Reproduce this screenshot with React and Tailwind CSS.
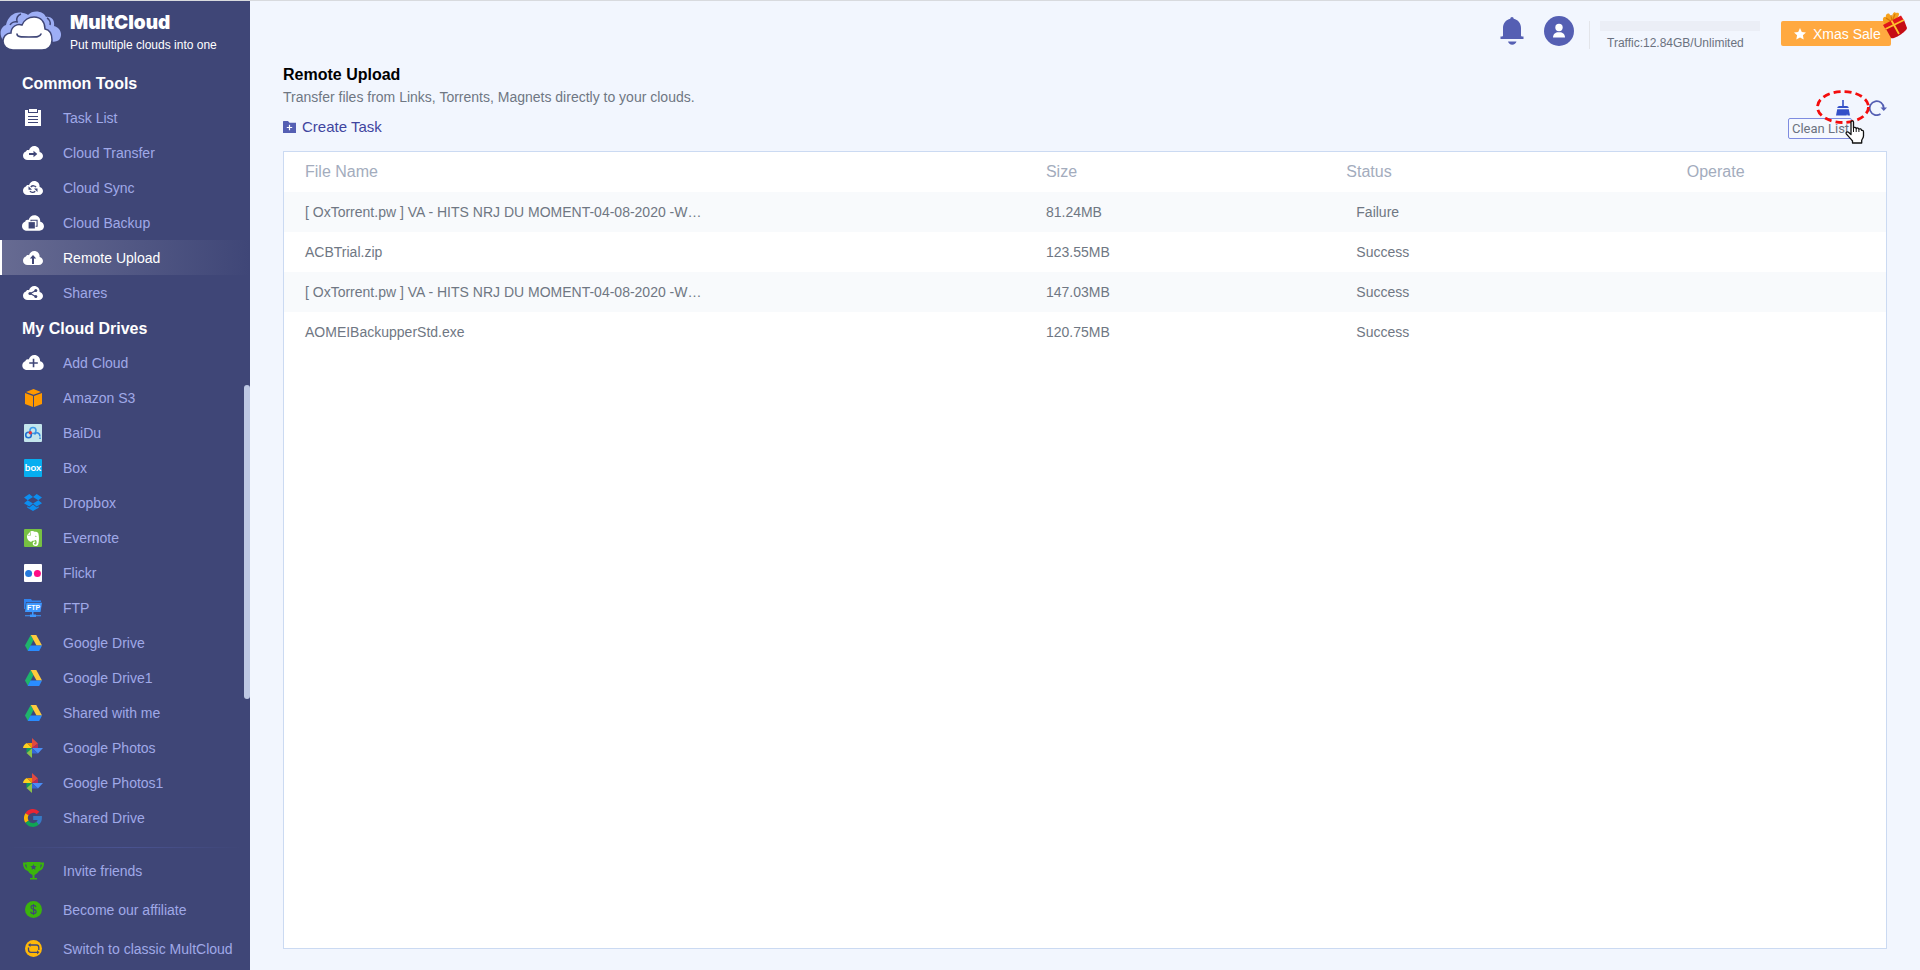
import React from 'react'
import { clsx } from 'clsx'

const CLOUD = 'M4.6 14C2 14 0 12.2 0 9.7 0 7.7 1.2 6.2 3 5.6 3.1 4.7 3.9 4 5 4c.4 0 .7 0 1 .2C6.8 1.7 8.8 0 11.2 0c3.2 0 5.4 2.4 5.4 5.3v.6C18.6 6.3 20 7.9 20 10c0 2.3-1.8 4-4.2 4z'

const CloudIcon = ({ className = 'w-5 h-[14px]', children }) => (
    <svg className={className} viewBox="0 0 20 14" fill="none" aria-hidden="true">
        <path d={CLOUD} fill="#fff" />
        {children}
    </svg>
)

const TaskIcon = () => (
    <svg className="w-4 h-[17px]" viewBox="0 0 16 17" aria-hidden="true">
        <path d="M0 1h3v3h10V1h3v16H0z" fill="#fff" />
        <path d="M4 0h8v3H4z" fill="#fff" />
        <path d="M3 7.5h10M3 10.5h10M3 13.5h10" stroke="#3f4677" />
    </svg>
)

const TransferIcon = () => (
    <CloudIcon>
        <path d="M6 7h4.5V4.8L14.3 8l-3.8 3.2V9H6z" fill="#3f4677" />
    </CloudIcon>
)

const SyncIcon = () => (
    <CloudIcon>
        <path d="M13 6.2C12 4.6 9.4 4.2 7.8 6M7 10c1 1.600 3.600 2 5.200.2" stroke="#3f4677" strokeWidth="1.400" />
        <path d="M5.500 5.200v3.500H9zM14.500 11V7.500H11z" fill="#3f4677" />
    </CloudIcon>
)

const BackupIcon = () => (
    <CloudIcon className="w-[22px] h-4">
        <path d="M8.200 5.500V4.500h5.500v5.500h-1.300" stroke="#3f4677" strokeWidth="1" />
        <path d="M6 6.200h5.700V12H6z" fill="#3f4677" />
    </CloudIcon>
)

const UploadIcon = () => (
    <CloudIcon>
        <path d="M10 4l3.200 3.500H11V13H9V7.500H6.800z" fill="#3f4677" />
    </CloudIcon>
)

const ShareIcon = () => (
    <CloudIcon>
        <path d="M13 4.500L7.300 7.500l5.700 3.200" stroke="#3f4677" strokeWidth="1.200" />
        <circle cx="7" cy="7.500" r="1.600" fill="#3f4677" />
        <circle cx="12.800" cy="4.600" r="1.500" fill="#3f4677" />
        <circle cx="12.800" cy="10.600" r="1.500" fill="#3f4677" />
    </CloudIcon>
)

const AddIcon = () => (
    <CloudIcon className="w-[22px] h-[15px]">
        <path d="M10.500 3.500v8M6.500 7.500h8" stroke="#3f4677" strokeWidth="1.500" />
    </CloudIcon>
)

const AmazonIcon = () => (
    <svg className="w-[17px] h-[18px]" viewBox="0 0 17 18" fill="#ff9900" aria-hidden="true">
        <path d="M8.500 0L16 2.900 8.500 5.700 1 2.900zM0 4l8 3v11l-8-3zM17 4L9 7v11l8-3z" />
    </svg>
)

const BaiduIcon = () => (
    <svg className="w-[18px] h-[18px]" viewBox="0 0 18 18" fill="none" aria-hidden="true">
        <rect width="18" height="18" rx="1" fill="#c3e5ec" />
        <circle cx="9" cy="6.500" r="3" stroke="#3d9be9" strokeWidth="1.600" />
        <circle cx="4.500" cy="11" r="2.800" stroke="#1f6fd0" strokeWidth="1.600" />
        <path d="M10.500 10.500c2-3 5.500-1.500 5.500 2" stroke="#2f86de" strokeWidth="1.500" />
        <path d="M15.300 13.500h1.500V15h-1.500z" fill="#2f86de" />
        <circle cx="6.300" cy="8.800" r="1.700" fill="#e8353b" />
    </svg>
)

const BoxIcon = () => (
    <svg className="w-[18px] h-[18px]" viewBox="0 0 18 18" aria-hidden="true">
        <rect width="18" height="18" rx="1" fill="#06aef0" />
        <text x="9" y="12" textAnchor="middle" fontSize="10" fill="#fff" fontFamily="Lato, sans-serif" fontWeight="bold">box</text>
    </svg>
)

const DropboxIcon = () => (
    <svg className="w-[18px] h-[17px]" viewBox="0 0 18 17" fill="#0c8ef0" aria-hidden="true">
        <path d="M5.300 0L9 3.100 3.700 6.300 0 3.400zM12.700 0L9 3.100l5.300 3.200L18 3.400zM0 9.300l3.700-3L9 9.600l-3.700 3zM18 9.300l-3.700-3L9 9.600l3.700 3zM9 10.600l3.700 3 2-1.300v1.400L9 17l-5.700-3.300v-1.400l2 1.300z" />
    </svg>
)

const EvernoteIcon = () => (
    <svg className="w-[18px] h-[18px]" viewBox="0 0 18 18" aria-hidden="true">
        <rect width="18" height="18" rx="1" fill="#77c142" />
        <path d="M3 6.200L6.500 2.500c1.500-.8 3-.6 4 .2 2 0 3.500.4 3.900 1.800.8 3.500.8 7-.1 10.500-.3 1.500-1.300 2-2.600 2-2 0-3-1-3-2.500s1-2.200 2.500-2.200v1.400c-.8 0-1.100.3-1.100.9s.5 1 1.300 1c.9 0 1.200-.8 1.200-2.300 0-1.300-.3-1.900-1-2.200-.9.800-2 .9-3.100.6-.6 1-1.500 1.200-2.500.7C3.700 11.500 2.600 9 3 6.200z" fill="#fff" />
        <path d="M10.800 7.600c.3-1 1.500-1 1.900.2z" fill="#77c142" />
        <path d="M3.500 6.300h3V3.200" stroke="#77c142" strokeWidth=".6" fill="none" />
    </svg>
)

const FlickrIcon = () => (
    <svg className="w-[18px] h-[18px]" viewBox="0 0 18 18" aria-hidden="true">
        <rect width="18" height="18" rx="1" fill="#fff" />
        <circle cx="4.600" cy="9.500" r="3.500" fill="#2479dc" />
        <circle cx="13.400" cy="9.500" r="3.500" fill="#ff0e87" />
    </svg>
)

const FtpIcon = () => (
    <svg className="w-[18px] h-[18px]" viewBox="0 0 18 18" aria-hidden="true">
        <path d="M0 0h7l1 1.500h9V3H2L1 10H0z" fill="#2f83f0" />
        <path d="M2.500 3.700H18L16.500 13H1z" fill="#3d98ff" />
        <path d="M8 13h1.500v2.500H12V18H6v-2.500h2zM1 16.200h16v1H1z" fill="#3d98ff" />
        <text x="9.500" y="11" textAnchor="middle" fontSize="7" fill="#fff" fontFamily="Liberation Sans, sans-serif" fontWeight="bold">FTP</text>
    </svg>
)

const DriveIcon = () => (
    <svg className="w-[17px] h-4" viewBox="0 0 17 16" aria-hidden="true">
        <path d="M5.700 0L8.500 5 3 16 0 10.500z" fill="#1eb46b" />
        <path d="M5.700 0h5.600L17 10.500h-5.500z" fill="#ffcb3c" />
        <path d="M5.500 10.500H17L14.200 16H2.700z" fill="#2a8cff" />
    </svg>
)

const PhotosIcon = () => (
    <svg className="w-5 h-5" viewBox="0 0 20 20" aria-hidden="true">
        <path d="M9 0l6 5.500L9 10z" fill="#e04a3f" />
        <path d="M15 5.500V10H9z" fill="#b52a5b" />
        <path d="M9 10h11l-5 5.500z" fill="#4a8df6" />
        <path d="M9 10l6 5.500H9z" fill="#3367d6" />
        <path d="M9 10v10l-5.500-5z" fill="#8bc34a" />
        <path d="M9 10l-5.500 5V10z" fill="#0f9d58" />
        <path d="M0 10c0-2 2-4.500 4-5l5 5z" fill="#fdd01f" />
        <path d="M4 5h5v5z" fill="#f29400" />
    </svg>
)

const GoogleIcon = () => (
    <svg className="w-[18px] h-[18px]" viewBox="0 0 18 18" fill="none" strokeWidth="3.800" aria-hidden="true">
        <path d="M3 5.300A7.100 7.100 0 0 1 14 4" stroke="#ea2533" />
        <path d="M3 12.700A7.100 7.100 0 0 1 3 5.300" stroke="#fbb404" />
        <path d="M13.800 14.200A7.100 7.100 0 0 1 3 12.700" stroke="#10a554" />
        <path d="M9.200 9H16c0 2.200-.8 4-2.300 5.200" stroke="#3779c4" />
    </svg>
)

const TrophyIcon = () => (
    <svg className="w-[21px] h-[18px]" viewBox="0 0 21 18" aria-hidden="true">
        <path d="M4.500 1.500H1C1 5 2.500 7.500 6 8.200M16.500 1.500H20C20 5 18.500 7.500 15 8.200" fill="none" stroke="#3bb40c" strokeWidth="2" />
        <path d="M3.500 0h14v3c0 5-2.500 8.500-6 10v3H14v1.500H7V16h2.500v-3C6 11.500 3.500 8 3.500 3z" fill="#3bb40c" />
        <path d="M10.500 2l.9 1.900 2.100.3L12 5.700l.4 2.100-1.900-1-1.900 1L9 5.700 7.500 4.200l2.100-.3z" fill="#3f4677" />
    </svg>
)

const CoinIcon = () => (
    <svg className="w-[17px] h-[17px]" viewBox="0 0 17 17" aria-hidden="true">
        <circle cx="8.500" cy="8.500" r="8.500" fill="#3bb40c" />
        <path d="M11 6.200C10.800 5 9.900 4.400 8.500 4.400S6 5.100 6 6.300c0 2.900 5.200 1.300 5.200 4.300 0 1.300-1.100 2-2.700 2S5.800 11.900 5.700 10.600M8.500 3v11" fill="none" stroke="#3f4677" strokeWidth="1.100" />
    </svg>
)

const SwitchIcon = () => (
    <svg className="w-[17px] h-[17px]" viewBox="0 0 17 17" aria-hidden="true">
        <circle cx="8.500" cy="8.500" r="8.500" fill="#ffb809" />
        <path d="M4 5h7.500c1.500 0 2.300.9 2.300 2.500V10M13 12.300H6c-1.500 0-2.500-.9-2.500-2.500V7.500" fill="none" stroke="#3f4677" strokeWidth="1.300" />
        <path d="M3 5l2.500-2v4zM14.500 12.300l-2.500-2v4z" fill="#3f4677" />
    </svg>
)

const Logo = () => (
    <svg className="w-[61px] h-10" viewBox="0 0 61 40" aria-hidden="true">
        <path d="M3 29C-1 24 0 16 6 14 8 5 15 0 23 2c2 0 4 1 5 2 5-6 16-4 18 2 5-1 9 3 8 9 7 2 9 9 5 14-3 2-6 2-9 1L10 33z" fill="#9daef5" />
        <path d="M10 14c1-2 4-4 8-3M17 10c-1-3 1-6 4-7M47 7c2 1 4 4 3 7" fill="none" stroke="#3f4677" strokeWidth="1.500" />
        <path d="M13 39C7 39 3 35 3 30c0-4 3-8 8-8 0-6 6-10 11-8 2-5 7-8 12-8 7 0 11 5 11 12 5 1 7 5 7 11 0 6-4 10-10 10z" fill="#fff" stroke="#3f4677" strokeWidth="1.500" />
        <path d="M17 23c0 3 4 3 12 3s11 0 12-3" fill="none" stroke="#3f4677" strokeWidth="1.600" strokeLinecap="round" />
    </svg>
)

const BellIcon = () => (
    <svg className="w-6 h-7" viewBox="0 0 24 28" fill="#555fb3" aria-hidden="true">
        <path d="M12 0c1 0 1.600.8 1.700 1.800C18 2.700 21 6.400 21 11v7.500c0 .8.600 1 1.500 1H23.500V22H.5v-2.500h1c.9 0 1.500-.2 1.500-1V11c0-4.600 3-8.300 7.300-9.200C10.400.8 11 0 12 0zM8 24.500h8.500c-.5 2-2.200 3.200-4.300 3.200S8.500 26.500 8 24.500z" />
    </svg>
)

const AvatarIcon = () => (
    <svg className="w-[30px] h-[30px]" viewBox="0 0 30 30" aria-hidden="true">
        <circle cx="15" cy="15" r="15" fill="#555fb3" />
        <circle cx="15" cy="11.500" r="3.700" fill="#fff" />
        <path d="M9 21.500c0-3 2-5.300 5-5.300h2c3 0 5 2.300 5 5.300z" fill="#fff" />
    </svg>
)

const StarIcon = () => (
    <svg className="w-3 h-3" viewBox="0 0 12 12" fill="#fff" aria-hidden="true">
        <path d="M6 0l1.800 3.900 4.200.5-3.100 2.900.8 4.200L6 9.500l-3.700 2 .8-4.200L0 4.400l4.200-.5z" />
    </svg>
)

const GiftIcon = () => (
    <svg className="w-7 h-7 absolute -top-[10px] -right-[18px]" viewBox="0 0 28 28" aria-hidden="true">
        <path d="M3 12C1 9 2 5 5 6c-1-3 3-5 4-2l2 3c0-4 2-7 4-5 3-1 4 1 2 4l-4 5-8 4z" fill="#f6a11c" />
        <path d="M5 7l6 4-1-7M14 3l-3 8" fill="none" stroke="#d97808" strokeWidth="1.200" />
        <path d="M2 14L20 4.500l3 5L5 19z" fill="#e0161b" />
        <path d="M5 18l18-9 3 8c0 3-13 12-16 10z" fill="#c50c14" />
        <path d="M10.500 9.500L18 23M4.500 18l18.500-9" stroke="#ffc02e" strokeWidth="1.800" fill="none" />
    </svg>
)

const FolderPlusIcon = () => (
    <svg className="w-[13px] h-3" viewBox="0 0 13 12" aria-hidden="true">
        <path d="M.5 0H5l1.500 1.800H13V12H0V.5z" fill="#555fb3" />
        <path d="M6.500 3.800v5.400M3.800 6.500h5.400" stroke="#fff" strokeWidth="1.200" />
    </svg>
)

const BroomIcon = () => (
    <svg className="w-[14px] h-4" viewBox="0 0 14 16" fill="#3350c8" aria-hidden="true">
        <path d="M6.200 0h1.600v6h2.700c1.300 0 2 .7 2.300 2H1.200c.3-1.300 1-2 2.300-2h2.700zM1.200 9.200h11.600L14 15.500h-2.500L11 14l-.3 1.500H0z" />
    </svg>
)

const RefreshIcon = () => (
    <svg className="w-[18px] h-4" viewBox="0 0 18 16" aria-hidden="true">
        <path d="M11.500 14A7 7 0 1 1 14.700 8" fill="none" stroke="#555fb3" strokeWidth="1.800" />
        <path d="M11.500 7.500H18L14.800 11z" fill="#555fb3" />
    </svg>
)

const HandCursor = () => (
    <svg className="w-5 h-6 absolute top-5 left-[9px] z-20" viewBox="0 0 20 24" aria-hidden="true">
        <path d="M6 2c0-1.500 2.500-1.500 2.500 0v6c.5-1 2.500-.8 2.700.5.700-.9 2.500-.6 2.700.7.900-.8 2.600-.3 2.600 1.100 1-.2 2 .4 2 1.700v4c0 2-1.500 3-1.800 4.500v2.500H7.500V21C6 19 2.500 15.500 1.300 13.800c-.8-1.600 1-2.500 2.200-1.500L6 14.500z" fill="#fff" stroke="#111" strokeWidth="1.300" strokeLinejoin="round" />
        <path d="M8.500 8v4M11.200 8.500V12M13.900 9.300V12" stroke="#111" />
    </svg>
)

const tools = [
    { label: 'Task List', icon: TaskIcon },
    { label: 'Cloud Transfer', icon: TransferIcon },
    { label: 'Cloud Sync', icon: SyncIcon },
    { label: 'Cloud Backup', icon: BackupIcon },
    { label: 'Remote Upload', icon: UploadIcon, active: true },
    { label: 'Shares', icon: ShareIcon },
]

const drives = [
    { label: 'Add Cloud', icon: AddIcon },
    { label: 'Amazon S3', icon: AmazonIcon },
    { label: 'BaiDu', icon: BaiduIcon },
    { label: 'Box', icon: BoxIcon },
    { label: 'Dropbox', icon: DropboxIcon },
    { label: 'Evernote', icon: EvernoteIcon },
    { label: 'Flickr', icon: FlickrIcon },
    { label: 'FTP', icon: FtpIcon },
    { label: 'Google Drive', icon: DriveIcon },
    { label: 'Google Drive1', icon: DriveIcon },
    { label: 'Shared with me', icon: DriveIcon },
    { label: 'Google Photos', icon: PhotosIcon },
    { label: 'Google Photos1', icon: PhotosIcon },
    { label: 'Shared Drive', icon: GoogleIcon },
]

const links = [
    { label: 'Invite friends', icon: TrophyIcon },
    { label: 'Become our affiliate', icon: CoinIcon },
    { label: 'Switch to classic MultCloud', icon: SwitchIcon },
]

const tasks = [
    { name: '[ OxTorrent.pw ] VA - HITS NRJ DU MOMENT-04-08-2020 -W…', size: '81.24MB', status: 'Failure' },
    { name: 'ACBTrial.zip', size: '123.55MB', status: 'Success' },
    { name: '[ OxTorrent.pw ] VA - HITS NRJ DU MOMENT-04-08-2020 -W…', size: '147.03MB', status: 'Success' },
    { name: 'AOMEIBackupperStd.exe', size: '120.75MB', status: 'Success' },
]

const NavItem = ({ item, className = 'h-[35px]' }) => {
    const Icon = item.icon
    return (
        <li>
            <a
                href="#"
                className={clsx(
                    'flex items-center border-l-2 pl-5 text-sm',
                    className,
                    item.active
                        ? 'border-white bg-linear-to-r from-[#676b92] to-[#3f4677] text-white'
                        : 'border-transparent text-[#a0a9e8]'
                )}
            >
                <span className="w-[22px] mr-[19px] flex justify-center shrink-0"><Icon /></span>
                {item.label}
            </a>
        </li>
    )
}

const NavHeading = ({ children }) => (
    <h2 className="h-[35px] pt-[3px] pl-[22px] flex items-center font-bold text-white">{children}</h2>
)

const Sidebar = () => (
    <aside className="w-[250px] shrink-0 bg-[#3f4677] flex flex-col">
        <a href="#" className="flex h-16 pt-[10px] text-white">
            <Logo />
            <span className="ml-[9px]">
                <span className="block font-[Inter,sans-serif] font-black text-[19px] leading-6">MultCloud</span>
                <span className="block text-xs leading-5">Put multiple clouds into one</span>
            </span>
        </a>
        <nav>
            <NavHeading>Common Tools</NavHeading>
            <ul>
                {tools.map(item => <NavItem key={item.label} item={item} />)}
            </ul>
        </nav>
        <nav className="relative">
            <NavHeading>My Cloud Drives</NavHeading>
            <ul>
                {drives.map(item => <NavItem key={item.label} item={item} />)}
            </ul>
            {/* Scroll thumb */}
            <div className="absolute right-0 top-[75px] w-[6px] h-[314px] rounded-full bg-[#bec8e4]" />
        </nav>
        <div className="mt-3 mx-2 h-px bg-linear-to-r from-transparent via-[#4a5391] to-transparent" />
        <ul className="pt-[3px]">
            {links.map(item => <NavItem key={item.label} item={item} className="h-[39px]" />)}
        </ul>
    </aside>
)

const TopBar = () => (
    <header className="flex items-start justify-end pt-[15px] pr-[29px]">
        <button type="button" aria-label="Notifications" className="mt-px"><BellIcon /></button>
        <button type="button" aria-label="Account" className="ml-5"><AvatarIcon /></button>
        <div className="ml-[15px] mt-[5px] pl-[10px] h-7 border-l border-[#e3e5ea]">
            <div className="w-40 h-[10px] bg-[#ebeef6]" />
            <p className="pl-[7px] mt-1 text-xs text-[#6b7280]">Traffic:12.84GB/Unlimited</p>
        </div>
        <button type="button" className="relative ml-[21px] mt-[5px] w-[110px] h-[25px] pl-[13px] flex items-center gap-[7px] rounded-xs bg-[#ffa940] text-sm text-white">
            <StarIcon />
            Xmas Sale
            <GiftIcon />
        </button>
    </header>
)

const App = () => {
    return (
        <div className="min-h-screen flex border-t border-[#d8dade] bg-[#f2f6fe] font-['Liberation_Sans',Arial,sans-serif]">
            <Sidebar />
            <div className="flex-1 min-w-0 flex flex-col">
                <TopBar />
                <main className="flex-1 flex flex-col px-[33px] pt-[14px] pb-[21px]">
                    {/* Heading and actions */}
                    <div className="flex items-end justify-between">
                        <div>
                            <h1 className="font-bold leading-6 text-black">Remote Upload</h1>
                            <p className="text-sm leading-5 text-[#6f7783]">Transfer files from Links, Torrents, Magnets directly to your clouds.</p>
                            <button type="button" className="flex items-center gap-[6px] h-10 mb-1 text-[15px] text-[#3f459f]">
                                <FolderPlusIcon />
                                Create Task
                            </button>
                        </div>
                        <div className="flex items-start gap-[19px] pb-[35px]">
                            <div className="relative">
                                <button type="button" aria-label="Clean List" className="block"><BroomIcon /></button>
                                <svg className="w-[54px] h-[34px] absolute -top-[10px] -left-5 z-10 max-w-none" viewBox="0 0 54 34" aria-hidden="true">
                                    <ellipse cx="27" cy="17" rx="25.500" ry="15.500" fill="none" stroke="#f40d0d" strokeWidth="2.800" strokeDasharray="7 4" />
                                </svg>
                                <span className="absolute top-[18px] -left-12 w-16 h-[21px] pl-[3px] flex items-center border border-[#7f8ce0] rounded-xs bg-[#f5f8fe] font-[Roboto,sans-serif] text-[13px] whitespace-nowrap text-[#6b7280]">Clean List</span>
                                <HandCursor />
                            </div>
                            <button type="button" aria-label="Refresh"><RefreshIcon /></button>
                        </div>
                    </div>

                    {/* Task table */}
                    <div className="flex-1 bg-white border border-[#cbdaf2]">
                        <table className="w-full table-fixed text-left text-sm text-[#6f7783]">
                            <thead>
                                <tr className="h-10 text-base text-[#a3acbd]">
                                    <th className="w-[46.25%] pl-[21px] font-normal">File Name</th>
                                    <th className="w-[18.75%] pl-[21px] font-normal">Size</th>
                                    <th className="w-[21.25%] pl-[21px] font-normal">Status</th>
                                    <th className="pl-[21px] font-normal">Operate</th>
                                </tr>
                            </thead>
                            <tbody>
                                {tasks.map((task, index) => (
                                    <tr key={index} className="h-10 odd:bg-[#f8fafc]">
                                        <td className="pl-[21px] truncate">{task.name}</td>
                                        <td className="pl-[21px]">{task.size}</td>
                                        <td className="pl-[31px]">{task.status}</td>
                                        <td />
                                    </tr>
                                ))}
                            </tbody>
                        </table>
                    </div>
                </main>
            </div>
        </div>
    )
}

export default App
